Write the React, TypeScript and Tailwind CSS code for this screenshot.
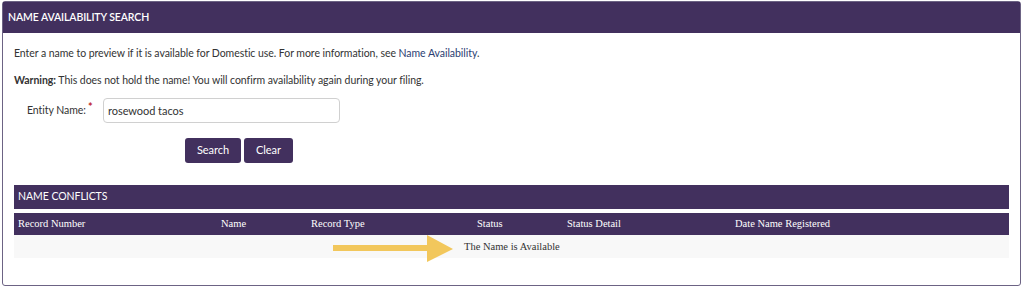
export default function App() {
  const columns = [
    { label: "Record Number", width: "w-[203px]" },
    { label: "Name", width: "w-[90px]" },
    { label: "Record Type", width: "w-[166px]" },
    { label: "Status", width: "w-[90px]" },
    { label: "Status Detail", width: "w-[168px]" },
    { label: "Date Name Registered", width: "flex-1" },
  ];

  return (
    <div className="w-[1024px] h-[290px] bg-white pt-[1px] pl-[2px] pr-[3px]">
      <div className="border border-[#6c6384] rounded-[3px] font-['Lato','Liberation_Sans',sans-serif] text-[#333]">
        <div className="h-[31px] bg-[#42305e] flex items-center pl-[5px] text-white text-[10.5px] font-semibold tracking-[-0.1px]">
          NAME AVAILABILITY SEARCH
        </div>

        <div className="px-[11px] pt-[12px] pb-[27px] text-[10.5px] tracking-[-0.05px]">
          <p className="leading-[16px]">
            Enter a name to preview if it is available for Domestic use. For
            more information, see{" "}
            <span className="text-[#2c3e72]">Name Availability</span>.
          </p>
          <p className="leading-[16px] mt-[11px]">
            <span className="font-bold">Warning:</span> This does not hold the
            name! You will confirm availability again during your filing.
          </p>

          <div className="mt-[10px] flex items-center">
            <label className="w-[89px] pl-[13px] flex items-start">
              Entity Name:
              <span className="text-[#c0262d] text-[11px] font-bold leading-none ml-[2px] -mt-[2px]">
                *
              </span>
            </label>
            <input
              readOnly
              value="rosewood tacos"
              className="w-[237px] h-[25px] border border-[#d0d0d0] rounded-[4px] px-[4px] text-[11px] text-[#333] outline-none"
            />
          </div>

          <div className="mt-[15px] ml-[171px] flex gap-[3px]">
            <button className="w-[56px] h-[25px] bg-[#42305e] text-white rounded-[3px] text-[11px]">
              Search
            </button>
            <button className="w-[49px] h-[25px] bg-[#42305e] text-white rounded-[3px] text-[11px]">
              Clear
            </button>
          </div>

          <div className="mt-[22px] h-[24px] bg-[#42305e] text-white flex items-center pl-[4px] text-[10.5px]">
            NAME CONFLICTS
          </div>

          <div className="mt-[4px] font-['Liberation_Serif','Times_New_Roman',serif] tracking-normal">
            <div className="h-[22px] bg-[#42305e] text-white flex items-center pl-[4px] text-[10.5px]">
              {columns.map((col) => (
                <div key={col.label} className={col.width}>
                  {col.label}
                </div>
              ))}
            </div>
            <div className="relative h-[23px] bg-[#f8f8f8] flex items-center pl-[450px] text-[10.5px] text-[#333]">
              The Name is Available
              <svg
                className="absolute left-[319px] top-0 overflow-visible"
                width="120"
                height="28"
                viewBox="0 0 120 28"
              >
                <path
                  d="M0 10 H94 V0 L120 14 L94 27 V16 H0 Z"
                  fill="#f2c75c"
                />
              </svg>
            </div>
          </div>
        </div>
      </div>
    </div>
  );
}
